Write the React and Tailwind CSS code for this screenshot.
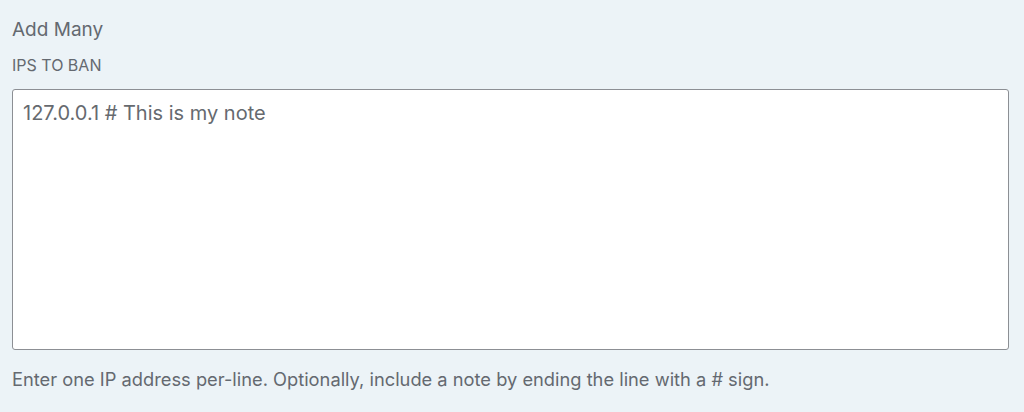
export default function App() {
  return (
    <div
      className="w-[1024px] h-[412px] bg-[#ecf3f7] pl-3 pr-[15px] pt-[18px] text-[#646970]"
      style={{ fontFamily: 'Inter, "Liberation Sans", sans-serif' }}
    >
      <h3 className="text-[19px] leading-6 m-0">Add Many</h3>
      <label className="block mt-[13px] text-[16px] leading-5 uppercase">
        IPs to ban
      </label>
      <textarea
        className="block mt-[14px] w-full h-[261px] bg-white border border-[#8c8f94] rounded-[3px] px-[10px] py-[9px] text-[20px] leading-7 text-[#666a6f] resize-none outline-none"
        defaultValue="127.0.0.1 # This is my note"
      />
      <p className="mt-[17px] text-[18.3px] leading-6">
        Enter one IP address per-line. Optionally, include a note by ending the line with a # sign.
      </p>
    </div>
  );
}
